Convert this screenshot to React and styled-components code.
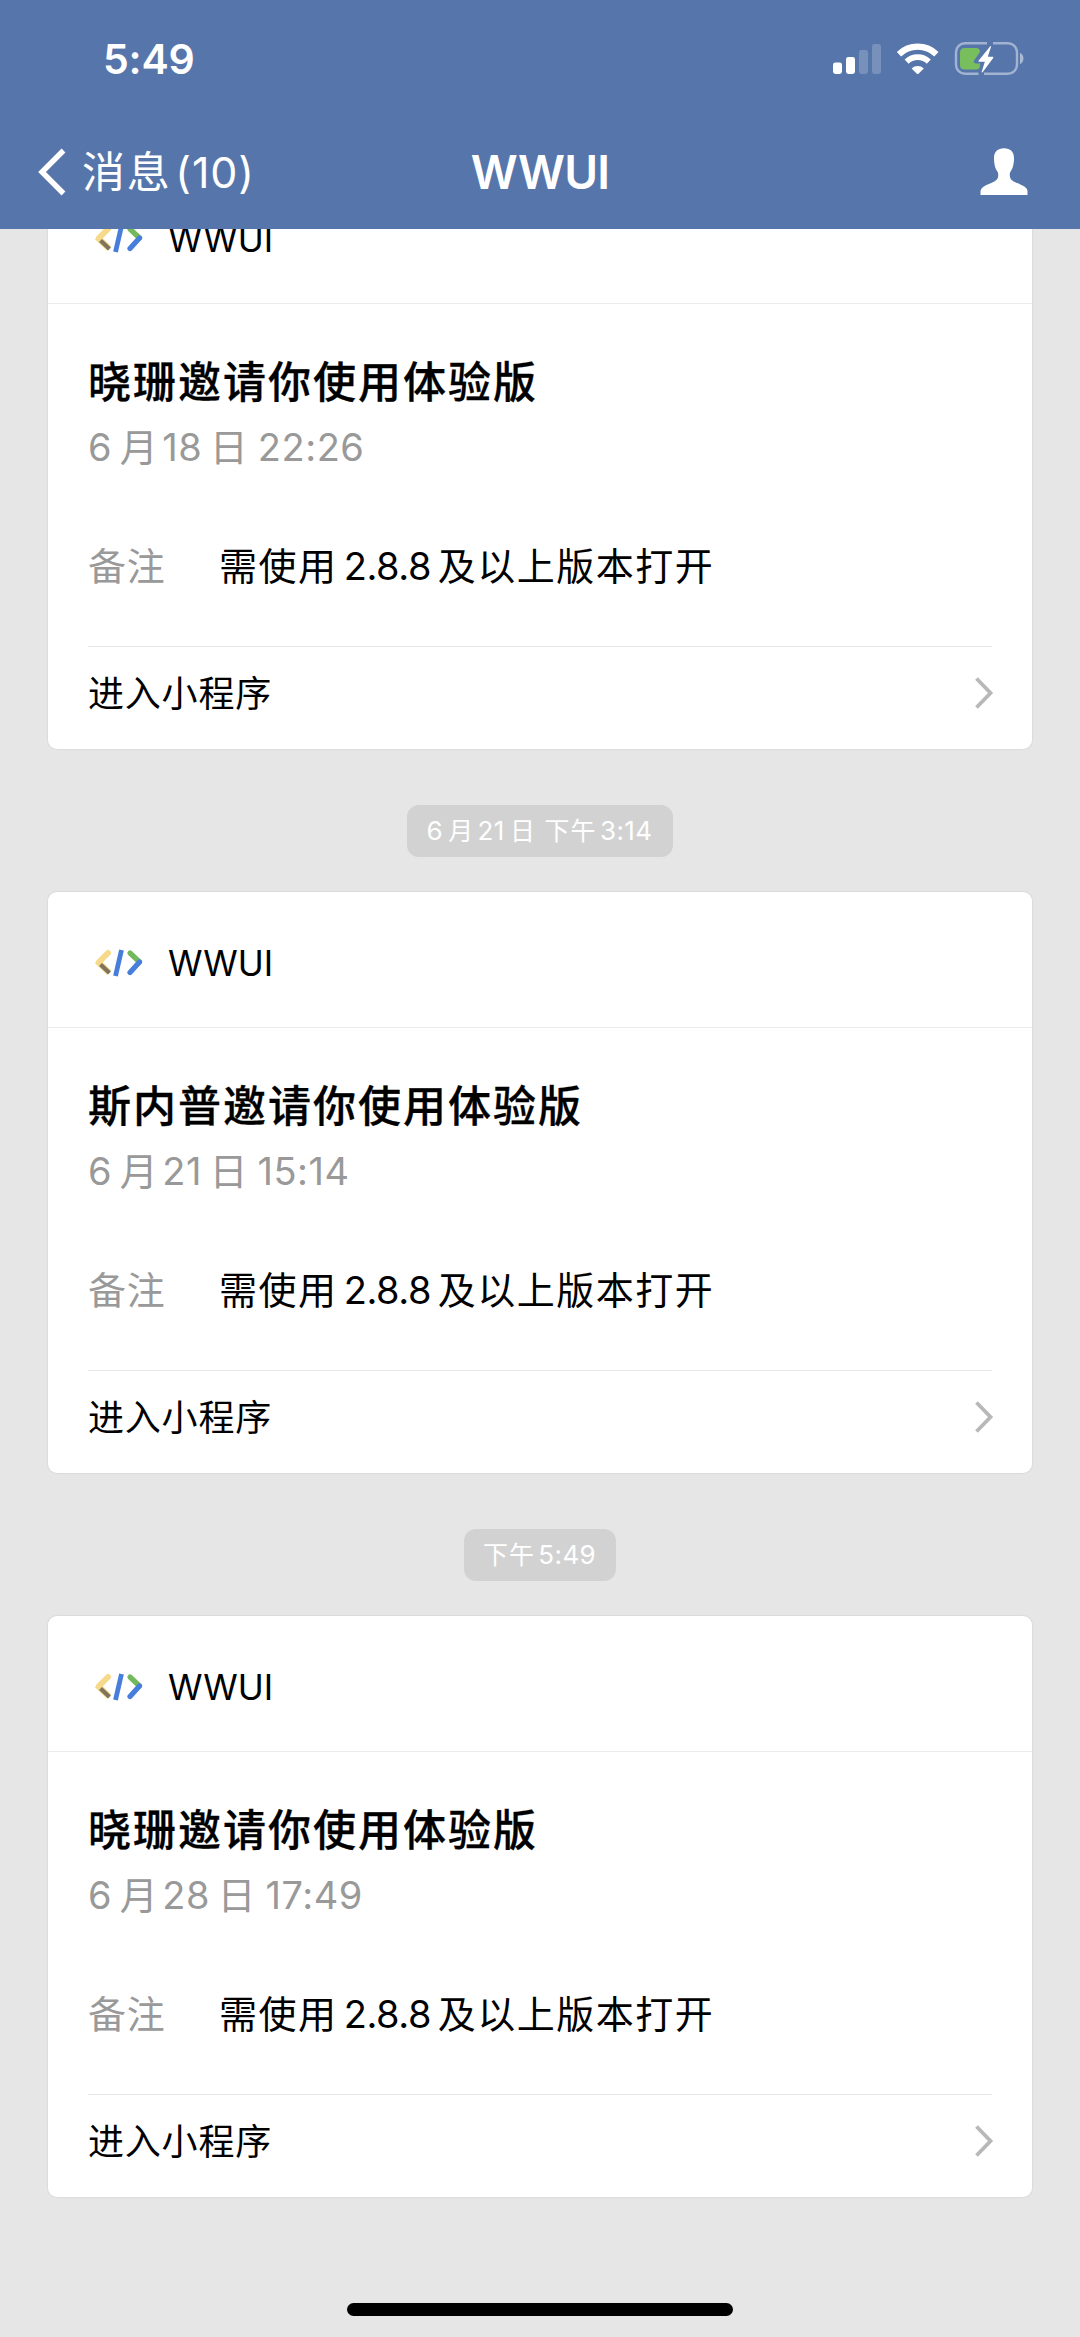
import React from "react";
import styled, { createGlobalStyle } from "styled-components";

const cards = [
  { title: "晓珊邀请你使用体验版", date: ["6", "月", "18", "日", " 22:26"] },
  {
    stamp: ["6", "月", "21", "日", " ", "下午", "3:14"],
    title: "斯内普邀请你使用体验版",
    date: ["6", "月", "21", "日", " 15:14"],
  },
  {
    stamp: ["下午", "5:49"],
    title: "晓珊邀请你使用体验版",
    date: ["6", "月", "28", "日", " 17:49"],
  },
];

const isHan = (text) => /[\u4e00-\u9fff]/.test(text);

function Mixed({ parts }) {
  return parts.map((part, i) =>
    isHan(part) ? <Han key={i}>{part}</Han> : <Latin key={i}>{part}</Latin>
  );
}

function StatusIcons() {
  return (
    <svg width="194" height="36" viewBox="832 41 194 36">
      <g fill="#fff">
        <rect x="833" y="62.5" width="9" height="11.5" rx="2.4" />
        <rect x="846" y="57" width="9" height="17" rx="2.4" />
        <rect x="859" y="50" width="9" height="24" rx="2.4" opacity="0.2" />
        <rect x="872" y="44" width="9" height="30" rx="2.4" opacity="0.2" />
      </g>
      <g fill="none" stroke="#fff">
        <path d="M899 54.2a27 27 0 0 1 37.4 0" strokeWidth="6.2" />
        <path d="M906.6 61.6a16.2 16.2 0 0 1 22.2 0" strokeWidth="5.8" />
      </g>
      <path
        d="M911.6 68.4a9 9 0 0 1 12.2 0l-5.3 5.3a1.2 1.2 0 0 1-1.6 0z"
        fill="#fff"
      />
      <path
        d="M987 43.3H965a9 9 0 0 0-9 9v12.4a9 9 0 0 0 9 9h13.5M993 43.3h15a9 9 0 0 1 9 9v12.4a9 9 0 0 1-9 9h-24"
        fill="none"
        stroke="#fff"
        strokeWidth="2.4"
        opacity="0.45"
      />
      <path d="M1020 53v11c4.6-1.6 4.6-9.4 0-11z" fill="#fff" opacity="0.5" />
      <path
        d="M964.5 48H976q4 0 4 4l-6 8.5q-.6 2.5 2 3h4V65q0 4.500-4 4.500h-11.500q-4.500 0-4.500-4.500V52.500q0-4.500 4.500-4.500z"
        fill="#78be5c"
      />
      <path
        d="M990.3 46.2l-11.6 14.3q-.7 1.2.6 1.2h5.5l-3.1 10.2q0 1 .9.4l10.6-14.4q.6-1.1-.6-1.1h-4.800l3.300-10.200q0-1-.8-.4z"
        fill="#fff"
      />
    </svg>
  );
}

function PersonIcon() {
  return (
    <svg width="48" height="48" viewBox="0 0 48 48">
      <path
        d="M24 .2c6.3 0 10 3.7 10 9.6 0 6.6-1.2 11-4 14.7-.8 5.2.6 7.2 3.6 8.9 4.4 2.3 8.4 3.4 11.4 5.6 2 1.5 2.5 3 2.5 4.8V47H.5v-3.200c0-1.800.7-3.300 2.600-4.800 3-2.200 7-3.300 11.300-5.600 3-1.700 4.500-3.700 3.600-8.900-2.800-3.700-4-8.100-4-14.700 0-5.900 3.700-9.600 10-9.600z"
        fill="#fff"
      />
    </svg>
  );
}

function CodeIcon() {
  return (
    <svg width="50" height="28" viewBox="0 0 50 28">
      <path d="M14 4L5 13" stroke="#f6d98a" strokeWidth="6" strokeLinecap="round" />
      <path d="M3 12l12 11.5" stroke="#f6d98a" strokeWidth="6" />
      <path d="M6.5 15.5l9 8.5" stroke="#80745d" strokeWidth="4.2" />
      <path d="M36 4l9.5 9" stroke="#74b85c" strokeWidth="5.2" strokeLinecap="round" />
      <path d="M45.5 13L36 23.5" stroke="#477edb" strokeWidth="5.2" strokeLinecap="round" />
      <path d="M27.5 1l-6 26" stroke="#477edb" strokeWidth="4.8" />
    </svg>
  );
}

function MessageCard({ title, date }) {
  return (
    <Card>
      <CardHeader>
        <CodeIcon />
        <AppName>WWUI</AppName>
      </CardHeader>
      <CardBody>
        <Title>{title}</Title>
        <CardDate>
          <Mixed parts={date} />
        </CardDate>
        <Remark>
          <RemarkLabel>备注</RemarkLabel>
          <RemarkText>
            <Mixed parts={["需使用", "2.8.8", "及以上版本打开"]} />
          </RemarkText>
        </Remark>
        <Entry>
          <span>进入小程序</span>
          <Chevron width="20" height="34" viewBox="0 0 20 34">
            <path d="M2.5 2.500l14 14.500-14 14.500" fill="none" stroke="#b8b8b8" strokeWidth="3.8" />
          </Chevron>
        </Entry>
      </CardBody>
    </Card>
  );
}

function App() {
  return (
    <Screen>
      <GlobalStyle />
      <TopBar>
        <StatusBar>
          <Clock>5:49</Clock>
          <StatusIcons />
        </StatusBar>
        <NavBar>
          <Back>
            <svg width="28" height="48" viewBox="0 0 28 48">
              <path d="M25.5 2.5L4 24l21.5 21.500" fill="none" stroke="#fff" strokeWidth="5.4" />
            </svg>
            <BackLabel>
              <Han>消息</Han>
              <Latin>(10)</Latin>
            </BackLabel>
          </Back>
          <NavTitle>WWUI</NavTitle>
          <NavAction>
            <PersonIcon />
          </NavAction>
        </NavBar>
      </TopBar>
      <Chat>
        {cards.map((card, i) => (
          <React.Fragment key={i}>
            {card.stamp && (
              <Stamp>
                <Mixed parts={card.stamp} />
              </Stamp>
            )}
            <MessageCard title={card.title} date={card.date} />
          </React.Fragment>
        ))}
      </Chat>
      <HomeArea>
        <HomeBar />
      </HomeArea>
    </Screen>
  );
}

const GlobalStyle = createGlobalStyle`
  * {
    box-sizing: border-box;
  }

  body {
    margin: 0;
    background: #e6e6e6;
  }

  svg {
    display: block;
    flex-shrink: 0;
  }
`;

const Screen = styled.div`
  width: 1080px;
  height: 2337px;
  display: flex;
  flex-direction: column;
  overflow: hidden;
  background: #e6e6e6;
  color: #000;
  font-family: Inter, "Noto Sans CJK SC", sans-serif;
`;

const Han = styled.span`
  letter-spacing: 0.04em;
`;

const Latin = styled.span`
  white-space: pre;
  margin: 0 0.2em 0 0.08em;
  word-spacing: -0.15em;

  &:first-child {
    margin-left: 0;
  }

  &:last-child {
    margin-right: 0;
  }
`;

const TopBar = styled.header`
  height: 229px;
  flex-shrink: 0;
  background: #5676ab;
  color: #fff;
`;

const StatusBar = styled.div`
  height: 118px;
  display: flex;
  align-items: center;
  justify-content: space-between;
  padding: 0 54px 0 103px;
`;

const Clock = styled.span`
  font-size: 41px;
  font-weight: 600;
  letter-spacing: -0.2px;
`;

const NavBar = styled.nav`
  height: 108px;
  display: grid;
  grid-template-columns: 1fr auto 1fr;
  align-items: center;
  padding: 0 38px;
`;

const Back = styled.div`
  display: flex;
  align-items: center;
`;

const BackLabel = styled.span`
  margin-left: 16px;
  font-size: 43px;
  line-height: 60px;

  ${Latin} {
    margin-left: 0.09em;
    letter-spacing: 0.9px;
  }
`;

const NavTitle = styled.h1`
  margin: 0;
  font-size: 46px;
  font-weight: 600;
  letter-spacing: -0.8px;
  line-height: 60px;
`;

const NavAction = styled.div`
  justify-self: end;
  margin-right: 14px;
`;

const Chat = styled.main`
  flex: 1;
  min-height: 0;
  display: flex;
  flex-direction: column;
  align-items: center;
  justify-content: flex-end;
  overflow: hidden;
  padding-bottom: 93px;
`;

const Stamp = styled.div`
  flex-shrink: 0;
  height: 52px;
  margin: 56px 0 35px;
  padding: 0 20px 0 19px;
  border-radius: 12px;
  background: #d2d2d2;
  color: #fff;
  font-size: 25px;
  line-height: 52px;

  ${Latin} {
    margin-left: 0.13em;
    font-size: 26px;
    letter-spacing: 0.4px;
    word-spacing: -0.33em;
  }

  ${Latin}:first-child {
    margin-left: 0;
  }
`;

const Card = styled.section`
  flex-shrink: 0;
  width: 984px;
  height: 581px;
  border-radius: 9px;
  background: #fff;
  box-shadow: 0 0 1px 1px rgba(0, 0, 0, 0.05);
`;

const CardHeader = styled.div`
  height: 136px;
  display: flex;
  align-items: center;
  padding: 6px 46px 0;
  border-bottom: 1px solid #ebebeb;
`;

const AppName = styled.span`
  margin-left: 24px;
  font-size: 35px;
`;

const CardBody = styled.div`
  padding: 48px 40px 0;
`;

const Title = styled.h2`
  margin: 0;
  font-size: 43px;
  font-weight: 500;
  letter-spacing: 2px;
  line-height: 60px;
  -webkit-text-stroke: 0.3px #000;
`;

const CardDate = styled.div`
  margin-top: 10px;
  color: #999;
  font-size: 38px;
  line-height: 50px;

  ${Latin} {
    letter-spacing: 0.5px;
  }
`;

const Remark = styled.div`
  display: flex;
  height: 50px;
  margin-top: 69px;
  font-size: 38px;
  line-height: 50px;
`;

const RemarkLabel = styled.span`
  width: 131px;
  color: #999;
  letter-spacing: 0.02em;
`;

const RemarkText = styled.span`
  ${Latin} {
    margin: 0 0.17em 0 0.16em;
    letter-spacing: -0.4px;
  }
`;

const Entry = styled.div`
  display: flex;
  align-items: center;
  justify-content: space-between;
  height: 93px;
  margin-top: 55px;
  border-top: 1px solid #e8e8e8;
  font-size: 36px;
  line-height: 50px;
  letter-spacing: 0.8px;

  > span {
    padding-top: 2px;
  }
`;

const Chevron = styled.svg`
  margin-right: -2px;
`;

const HomeArea = styled.footer`
  height: 47px;
  flex-shrink: 0;
  display: flex;
  justify-content: center;
  padding-top: 13px;
`;

const HomeBar = styled.div`
  width: 386px;
  height: 13px;
  border-radius: 7px;
  background: #000;
`;

export default App;
